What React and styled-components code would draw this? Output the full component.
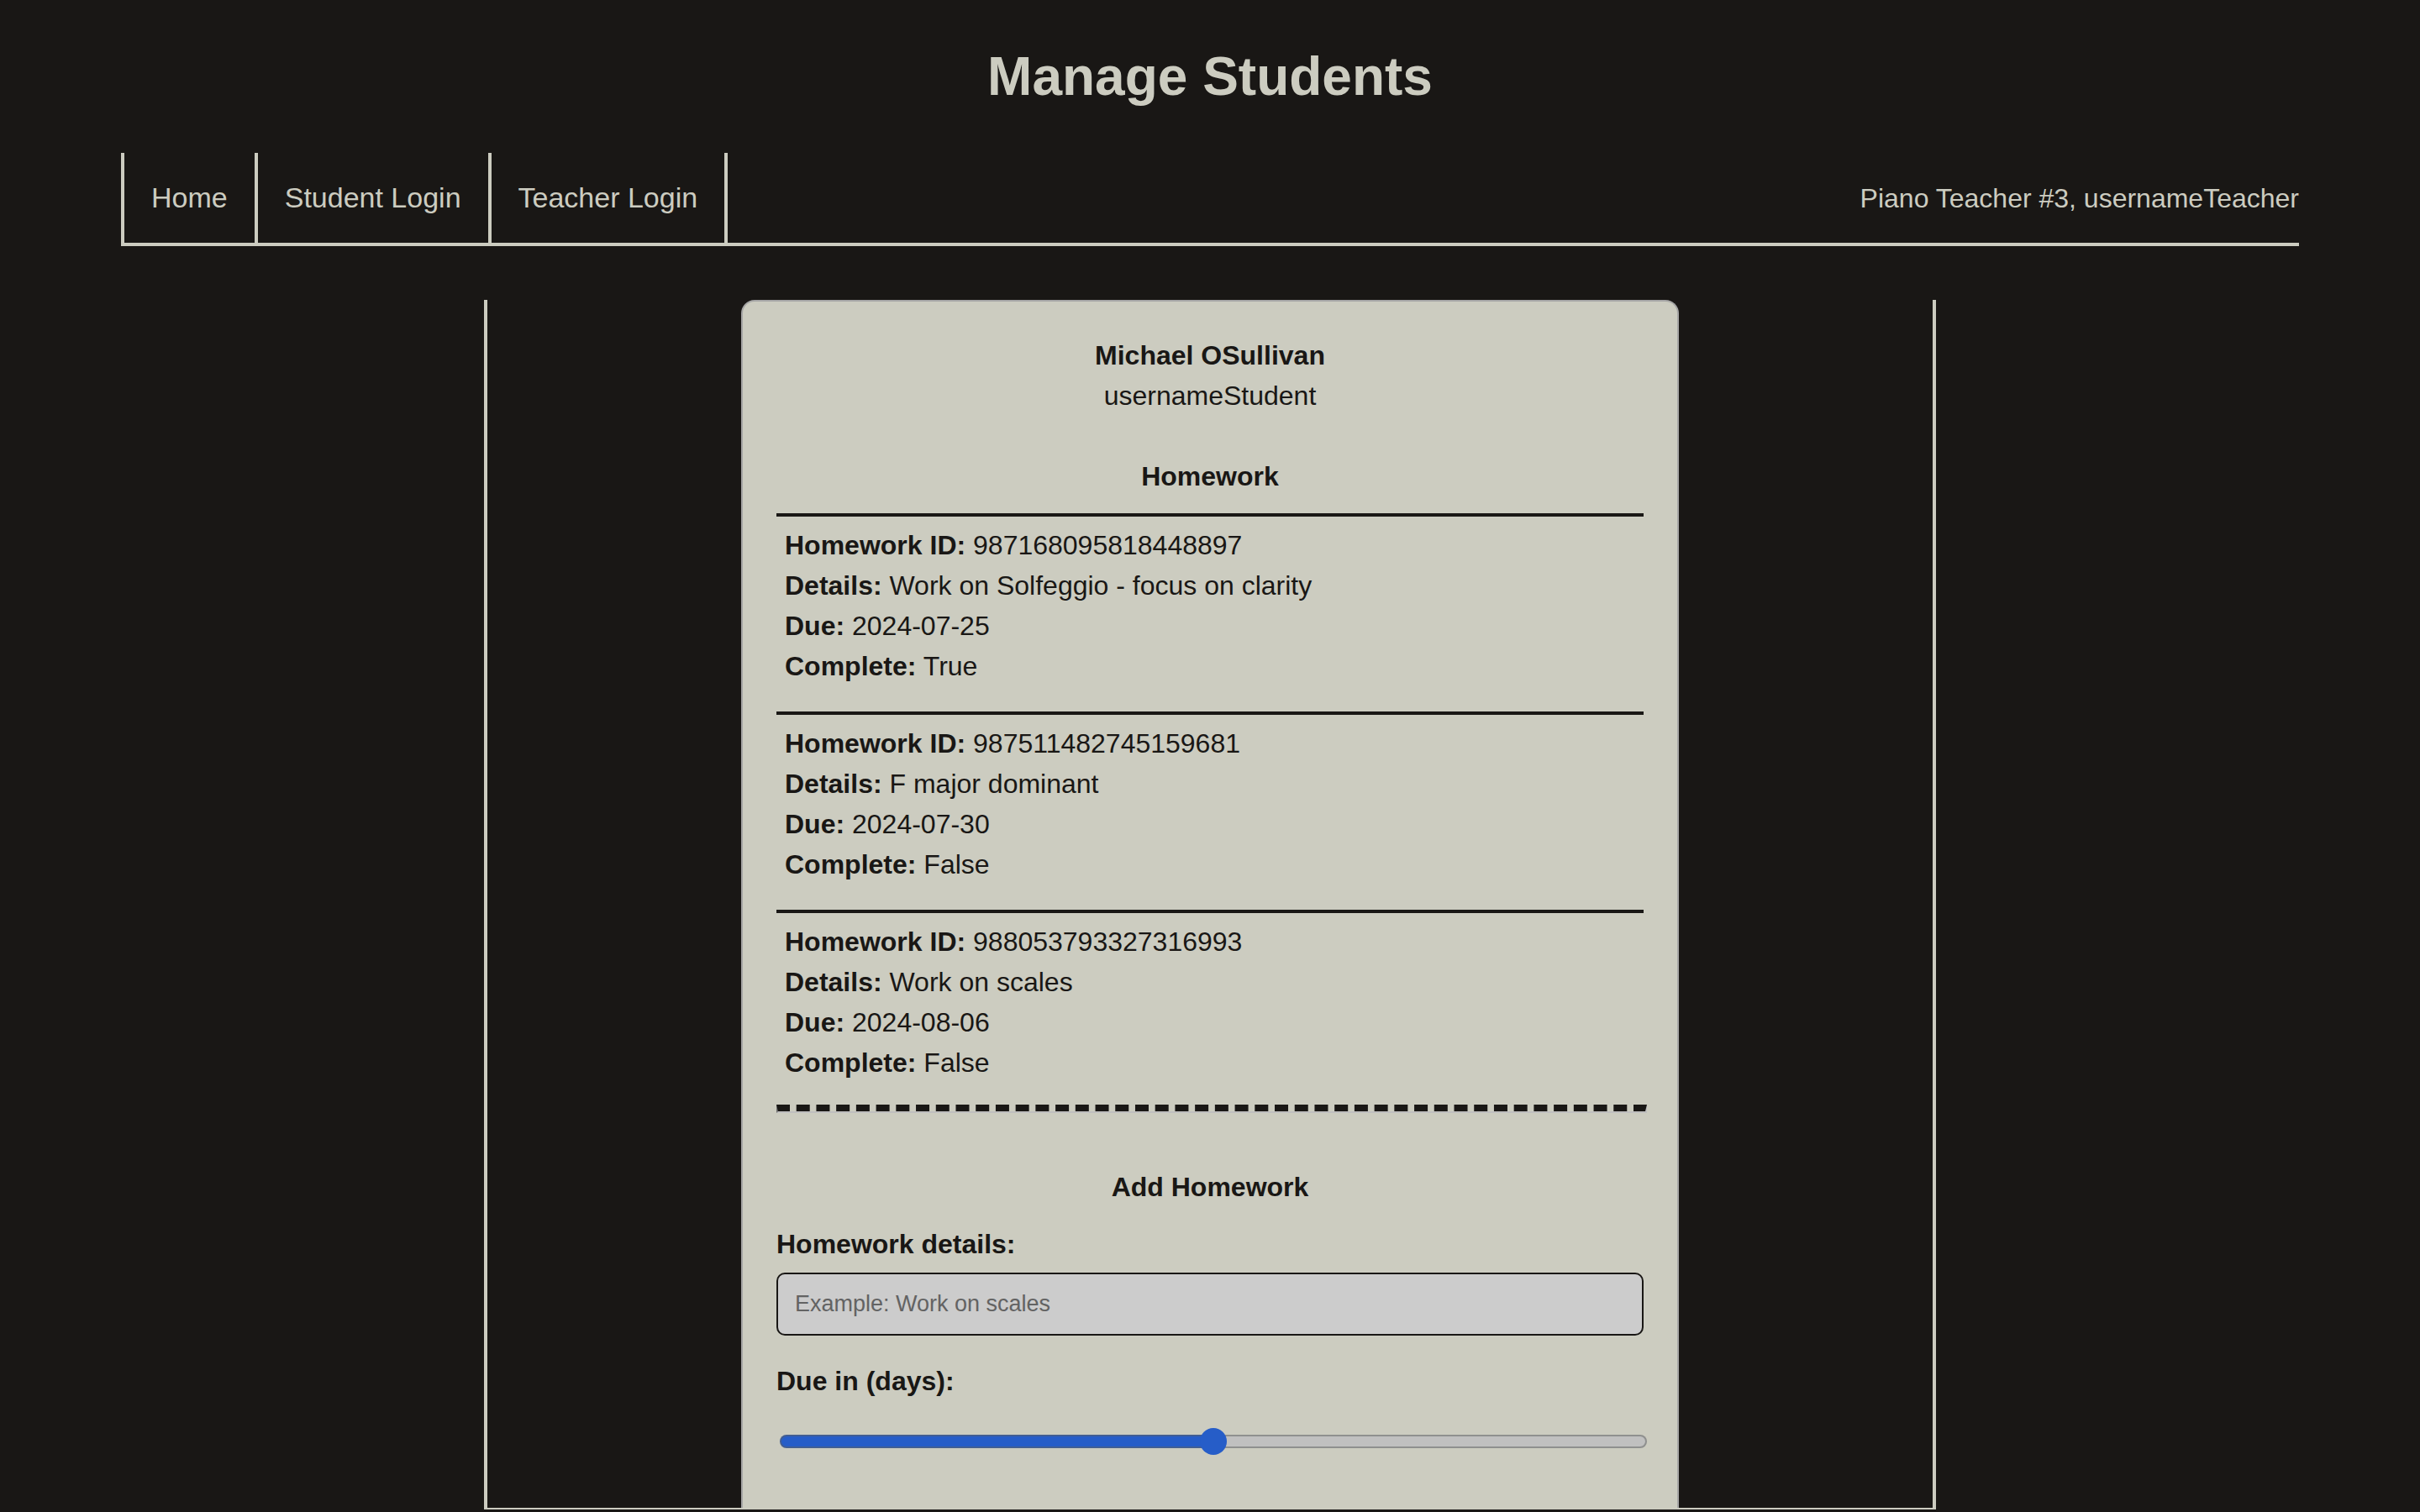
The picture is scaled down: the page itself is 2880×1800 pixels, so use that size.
import React, { useState } from 'react';
import styled, { createGlobalStyle } from 'styled-components';

const ink = '#191715';
const sand = '#ccccc0';

const GlobalStyle = createGlobalStyle`
  *, *::before, *::after { box-sizing: border-box; }
  body {
    margin: 0;
    background: ${ink};
    color: ${sand};
    font-family: "Liberation Sans", Arial, Helvetica, sans-serif;
    font-size: 32px;
    line-height: 48px;
    overflow: hidden;
  }
`;

const Title = styled.h1`
  margin: 0;
  padding: 43px 0;
  font-size: 64px;
  line-height: 96px;
  text-align: center;
`;

const NavBar = styled.nav`
  display: flex;
  justify-content: space-between;
  align-items: center;
  margin: 0 5%;
  border-bottom: 4px solid ${sand};
`;

const NavList = styled.ul`
  display: flex;
  margin: 0;
  padding: 0;
  list-style: none;
  border-left: 4px solid ${sand};
`;

const NavItem = styled.li`
  border-right: 4px solid ${sand};
`;

const NavLink = styled.a`
  display: block;
  padding: 29px 32px 30px;
  color: ${sand};
  font-size: 34px;
  text-decoration: none;
`;

const UserName = styled.span``;

const Panel = styled.main`
  display: flex;
  justify-content: center;
  height: 80vh;
  margin: 64px 20% 0;
  border: 4px solid ${sand};
  border-top: 0;
  border-bottom-width: 2px;
  overflow: hidden;
`;

const Card = styled.article`
  box-sizing: content-box;
  width: 60%;
  padding: 40px 40px 0;
  background: ${sand};
  color: ${ink};
  border: 2px solid #a5a5a5;
  border-bottom: 0;
  border-radius: 16px 16px 0 0;
`;

const Student = styled.header`
  margin-bottom: 48px;
  text-align: center;
`;

const StudentName = styled.h2`
  margin: 0;
  font-size: 32px;
`;

const SectionTitle = styled.h3`
  margin: 0 0 20px;
  font-size: 32px;
  text-align: center;
`;

const Homework = styled.section`
  padding: 10px 10px 30px;
  border-top: 4px solid ${ink};
`;

const Field = styled.div``;

const Divider = styled.hr`
  box-sizing: content-box;
  width: 100%;
  margin: -4px 0 64px;
  border: 2px inset #bfbfbf;
  border-top: 8px dashed ${ink};
`;

const Form = styled.form`
  display: flex;
  flex-direction: column;
`;

const Label = styled.label`
  font-weight: bold;
`;

const TextInput = styled.input`
  margin: 10px 0 30px;
  padding: 20px;
  width: 100%;
  height: 75px;
  border: 2px solid ${ink};
  border-radius: 10px;
  background: #cccccc;
  color: ${ink};
  font-family: inherit;
  font-size: 27px;
  outline: none;
  &::placeholder { color: #636363; opacity: 1; }
`;

const Slider = styled.input`
  appearance: none;
  width: 100%;
  height: 32px;
  margin: 32px 0 0 4px;
  background: transparent;
  &::-webkit-slider-runnable-track {
    height: 16px;
    border: 2px solid rgba(94, 96, 94, 0.5);
    border-radius: 8px;
    background: linear-gradient(to right, #265dc8 ${(p) => p.$fill}%, #c0c0c0 ${(p) => p.$fill}%) border-box;
  }
  &::-webkit-slider-thumb {
    appearance: none;
    width: 32px;
    height: 32px;
    margin-top: -10px;
    border-radius: 50%;
    background: #265dc8;
  }
`;

const links = ['Home', 'Student Login', 'Teacher Login'];

const homework = [
  { id: '987168095818448897', details: 'Work on Solfeggio - focus on clarity', due: '2024-07-25', complete: 'True' },
  { id: '987511482745159681', details: 'F major dominant', due: '2024-07-30', complete: 'False' },
  { id: '988053793327316993', details: 'Work on scales', due: '2024-08-06', complete: 'False' },
];

export default function App() {
  const [days, setDays] = useState(50);
  return (
    <>
      <GlobalStyle />
      <Title>Manage Students</Title>
      <NavBar>
        <NavList>
          {links.map((name) => (
            <NavItem key={name}><NavLink href="#">{name}</NavLink></NavItem>
          ))}
        </NavList>
        <UserName>Piano Teacher #3, usernameTeacher</UserName>
      </NavBar>
      <Panel>
        <Card>
          <Student>
            <StudentName>Michael OSullivan</StudentName>
            <Field>usernameStudent</Field>
          </Student>
          <SectionTitle>Homework</SectionTitle>
          {homework.map((h) => (
            <Homework key={h.id}>
              <Field><b>Homework ID:</b> {h.id}</Field>
              <Field><b>Details:</b> {h.details}</Field>
              <Field><b>Due:</b> {h.due}</Field>
              <Field><b>Complete:</b> {h.complete}</Field>
            </Homework>
          ))}
          <Divider />
          <SectionTitle>Add Homework</SectionTitle>
          <Form>
            <Label htmlFor="details">Homework details:</Label>
            <TextInput id="details" type="text" placeholder="Example: Work on scales" />
            <Label htmlFor="days">Due in (days):</Label>
            <Slider
              id="days"
              type="range"
              min="0"
              max="100"
              value={days}
              $fill={days}
              onChange={(e) => setDays(Number(e.target.value))}
            />
          </Form>
        </Card>
      </Panel>
    </>
  );
}
